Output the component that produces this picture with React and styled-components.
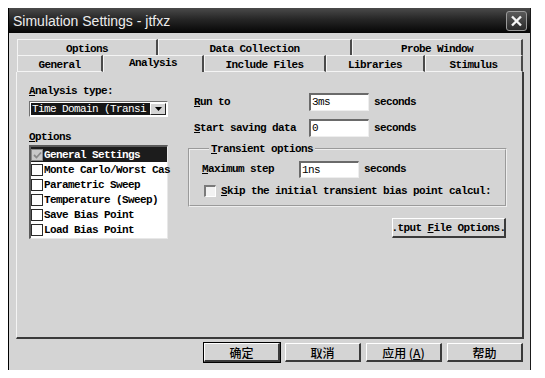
import React from "react";
import styled, { createGlobalStyle } from "styled-components";

const MONO = '"Liberation Mono", "DejaVu Sans Mono", monospace';
const CJK = '"Noto Sans CJK SC", "Liberation Sans", sans-serif';

const GlobalStyle = createGlobalStyle`
  * { box-sizing: border-box; }
  body {
    margin: 0;
    background: #ffffff;
    font-family: ${MONO};
  }
`;

// Ventana principal
const Dialog = styled.div`
  margin: 8px 0 0 8px;
  width: 523px;
  height: 362px;
  background: #d4d4d4;
  border-left: 1px solid #000;
  border-right: 1px solid #1a1a1a;
  display: flex;
  flex-direction: column;
`;

const TitleBar = styled.div`
  height: 25px;
  flex: none;
  display: flex;
  align-items: center;
  justify-content: space-between;
  padding: 0 3px 0 4px;
  background: linear-gradient(#4a4a4a, #262626 45%, #050505);
`;

const Title = styled.span`
  font-family: "Liberation Sans", Arial, sans-serif;
  font-size: 14px;
  color: #ececec;
`;

const CloseButton = styled.div`
  width: 21px;
  height: 20px;
  border: 1px solid #9a9a9a;
  border-radius: 3px;
  background: linear-gradient(#5a5a5a, #2a2a2a);
  display: flex;
  align-items: center;
  justify-content: center;
`;

const Body = styled.div`
  flex: 1;
  display: flex;
  flex-direction: column;
  padding: 6px 7px 8px 7px;
`;

// Pestañas
const TabStrip = styled.div`
  margin-left: 1px;
  width: 506px;
  display: flex;
  flex-direction: column;
`;

const TabRow = styled.div`
  display: flex;
  height: ${(p) => p.$h}px;
`;

const Tab = styled.div`
  width: ${(p) => p.$w}px;
  flex: none;
  border-top: 1px solid #f4f4f4;
  border-left: 1px solid #f4f4f4;
  border-right: 2px solid #4a4a4a;
  border-bottom: ${(p) => (p.$bottom ? "1px solid #f4f4f4" : "none")};
  display: flex;
  align-items: center;
  justify-content: center;
  padding-top: ${(p) => (p.$sel ? 0 : 2)}px;
  padding-bottom: ${(p) => (p.$sel ? 3 : 0)}px;
  font-family: ${MONO};
  font-size: 11px;
  font-weight: bold;
  letter-spacing: -0.6px;
  color: #000;
  white-space: nowrap;
`;

const Panel = styled.div`
  width: 508px;
  height: 267px;
  flex: none;
  border-left: 1px solid #f4f4f4;
  border-right: 2px solid #3a3a3a;
  border-bottom: 2px solid #3a3a3a;
  display: flex;
  gap: 20px;
  padding: 13px 0 0 12px;
  font-family: ${MONO};
  font-size: 11px;
  font-weight: bold;
  letter-spacing: -0.6px;
  color: #000;
`;

const LeftColumn = styled.div`
  width: 139px;
  display: flex;
  flex-direction: column;
`;

const RightColumn = styled.div`
  width: 319px;
  display: flex;
  flex-direction: column;
`;

const Label = styled.div`
  height: 12px;
  line-height: 12px;
  margin-top: ${(p) => p.$mt || 0}px;
  white-space: nowrap;
`;

const Select = styled.div`
  margin-top: 4px;
  height: 16px;
  display: flex;
  border-top: 1px solid #707070;
  border-left: 1px solid #707070;
  border-bottom: 1px solid #fff;
  border-right: 1px solid #fff;
  background: #fff;
  padding: 1px;
`;

const SelectValue = styled.div`
  flex: 1;
  background: #161616;
  color: #fff;
  font-weight: normal;
  line-height: 12px;
  padding-left: 1px;
  white-space: nowrap;
`;

const ArrowButton = styled.div`
  width: 16px;
  flex: none;
  background: #d4d4d4;
  border-top: 1px solid #fff;
  border-left: 1px solid #fff;
  border-right: 1px solid #222;
  border-bottom: 1px solid #222;
  display: flex;
  align-items: center;
  justify-content: center;
`;

const List = styled.div`
  margin-top: 2px;
  height: 94px;
  background: #fff;
  border-top: 2px solid #5a5a5a;
  border-left: 2px solid #5a5a5a;
  border-right: 1px solid #e8e8e8;
  border-bottom: 1px solid #e8e8e8;
`;

const Item = styled.div`
  height: 15px;
  display: flex;
  align-items: center;
  gap: 1px;
  white-space: nowrap;
  background: ${(p) => (p.$sel ? "#1c1c1c" : "transparent")};
  color: ${(p) => (p.$sel ? "#fff" : "#000")};
`;

const Check = styled.span`
  width: 12px;
  height: 12px;
  flex: none;
  border: 1px solid ${(p) => (p.$on ? "#8a8a8a" : "#2a2a2a")};
  background: ${(p) => (p.$on ? "#c8c8c8" : "#fff")};
  display: flex;
  align-items: center;
  justify-content: center;
`;

const FieldRow = styled.div`
  display: flex;
  align-items: center;
  height: 18px;
  margin-top: ${(p) => p.$mt || 0}px;
  padding-left: ${(p) => p.$pl || 0}px;
`;

const FieldLabel = styled.span`
  width: ${(p) => p.$w}px;
  flex: none;
  white-space: nowrap;
`;

const TextInput = styled.div`
  width: 60px;
  height: ${(p) => p.$h || 18}px;
  flex: none;
  background: #fff;
  border-top: 2px solid #6a6a6a;
  border-left: 2px solid #6a6a6a;
  border-bottom: 1px solid #eee;
  border-right: 1px solid #eee;
  padding-left: 1px;
  line-height: 14px;
  font-weight: normal;
  margin-right: 5px;
`;

const Group = styled.fieldset`
  margin: 6px 0 0 0;
  padding: 5px 0 0 12px;
  height: 64px;
  border: 2px groove #eeeeee;
  min-width: 0;
`;

const Legend = styled.legend`
  margin-left: 7px;
  padding: 0 2px;
  line-height: 12px;
`;

const CheckRow = styled.div`
  display: flex;
  align-items: center;
  gap: 5px;
  margin: 7px 0 0 2px;
  white-space: nowrap;
`;

const BigCheck = styled.span`
  width: 12px;
  height: 12px;
  flex: none;
  background: #f2f2f2;
  border-top: 2px solid #7a7a7a;
  border-left: 2px solid #7a7a7a;
  border-right: 1px solid #fff;
  border-bottom: 1px solid #fff;
`;

const Button = styled.div`
  width: ${(p) => p.$w}px;
  height: ${(p) => p.$h}px;
  flex: none;
  background: #d4d4d4;
  border-top: 1px solid #fff;
  border-left: 1px solid #fff;
  border-right: 2px solid #3a3a3a;
  border-bottom: 2px solid #3a3a3a;
  outline: ${(p) => (p.$default ? "1px solid #000" : "none")};
  display: flex;
  align-items: center;
  justify-content: center;
  white-space: nowrap;
  color: #000;
`;

const OptionsButton = styled(Button)`
  align-self: flex-end;
  margin: 11px 1px 0 0;
`;

const ButtonRow = styled.div`
  margin-top: 4px;
  display: flex;
  justify-content: flex-end;
  gap: 5px;
  font-family: ${CJK};
  font-size: 12px;
  font-weight: 500;
`;

const U = styled.span`
  text-decoration: underline;
`;

const row1 = [
  ["Options", 141],
  ["Data Collection", 194],
  ["Probe Window", 171],
];

const row2 = [
  ["General", 86],
  ["Analysis", 101],
  ["Include Files", 122],
  ["Libraries", 99],
  ["Stimulus", 98],
];

const options = [
  "General Settings",
  "Monte Carlo/Worst Cas",
  "Parametric Sweep",
  "Temperature (Sweep)",
  "Save Bias Point",
  "Load Bias Point",
];

const TickIcon = ({ color }) => (
  <svg width="9" height="8" viewBox="0 0 9 8">
    <path d="M1 4 L3.5 6.5 L8 1.5" stroke={color} strokeWidth="1.8" fill="none" />
  </svg>
);

const App = () => {
  return (
    <>
      <GlobalStyle />
      <Dialog>
        <TitleBar>
          <Title>Simulation Settings - jtfxz</Title>
          <CloseButton>
            <svg width="13" height="12" viewBox="0 0 13 12">
              <path d="M2 1.5 L11 10.5 M11 1.5 L2 10.5" stroke="#f4f4f4" strokeWidth="2.4" />
            </svg>
          </CloseButton>
        </TitleBar>

        <Body>
          <TabStrip>
            <TabRow $h={16}>
              {row1.map(([name, w]) => (
                <Tab key={name} $w={w}>{name}</Tab>
              ))}
            </TabRow>
            <TabRow $h={17}>
              {row2.map(([name, w]) => (
                <Tab key={name} $w={w} $sel={name === "Analysis"} $bottom={name !== "Analysis"}>
                  {name}
                </Tab>
              ))}
            </TabRow>
          </TabStrip>

          <Panel>
            <LeftColumn>
              <Label>
                <U>A</U>nalysis type:
              </Label>
              <Select>
                <SelectValue>Time Domain (Transi</SelectValue>
                <ArrowButton>
                  <svg width="7" height="4" viewBox="0 0 7 4">
                    <path d="M0 0 H7 L3.5 4 Z" fill="#000" />
                  </svg>
                </ArrowButton>
              </Select>
              <Label $mt={14}>
                <U>O</U>ptions
              </Label>
              <List>
                {options.map((name, i) => (
                  <Item key={name} $sel={i === 0}>
                    <Check $on={i === 0}>{i === 0 && <TickIcon color="#8a8a8a" />}</Check>
                    {name}
                  </Item>
                ))}
              </List>
            </LeftColumn>

            <RightColumn>
              <FieldRow $mt={8} $pl={6}>
                <FieldLabel $w={115}>
                  <U>R</U>un to
                </FieldLabel>
                <TextInput>3ms</TextInput>
                seconds
              </FieldRow>
              <FieldRow $mt={8} $pl={6}>
                <FieldLabel $w={115}>
                  <U>S</U>tart saving data
                </FieldLabel>
                <TextInput>0</TextInput>
                seconds
              </FieldRow>

              <Group>
                <Legend>
                  <U>T</U>ransient options
                </Legend>
                <FieldRow>
                  <FieldLabel $w={97}>
                    <U>M</U>aximum step
                  </FieldLabel>
                  <TextInput $h={17}>1ns</TextInput>
                  seconds
                </FieldRow>
                <CheckRow>
                  <BigCheck />
                  <span>
                    <U>S</U>kip the initial transient bias point calcul:
                  </span>
                </CheckRow>
              </Group>

              <OptionsButton $w={114} $h={20}>
                <span>
                  .tput <U>F</U>ile Options.
                </span>
              </OptionsButton>
            </RightColumn>
          </Panel>

          <ButtonRow>
            <Button $w={76} $h={19} $default>确定</Button>
            <Button $w={76} $h={19}>取消</Button>
            <Button $w={76} $h={19}>
              应用 (<U>A</U>)
            </Button>
            <Button $w={76} $h={19}>帮助</Button>
          </ButtonRow>
        </Body>
      </Dialog>
    </>
  );
};

export default App;
